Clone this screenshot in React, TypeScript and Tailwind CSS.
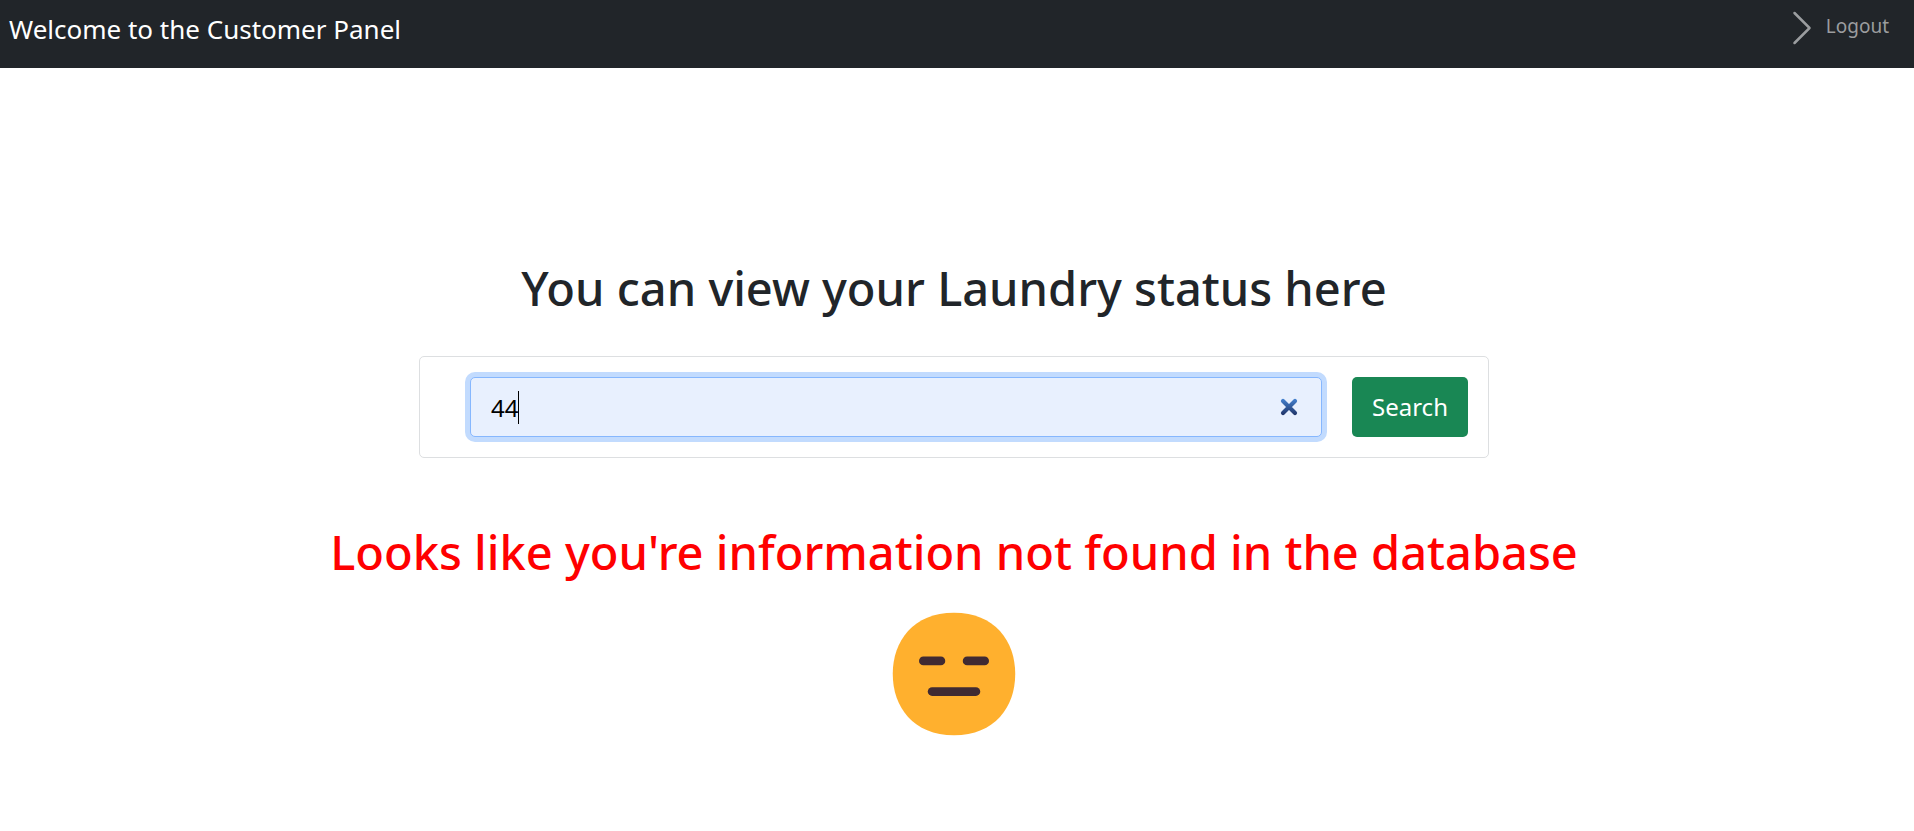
import { useRef, useState } from "react";

function ChevronIcon() {
  return (
    <svg viewBox="0 0 16 16" fill="currentColor" className="size-10 shrink-0" aria-hidden="true">
      <path
        fillRule="evenodd"
        d="M4.646 1.646a.5.5 0 0 1 .708 0l6 6a.5.5 0 0 1 0 .708l-6 6a.5.5 0 0 1-.708-.708L10.293 8 4.646 2.354a.5.5 0 0 1 0-.708z"
      />
    </svg>
  );
}

function ExpressionlessFace() {
  return (
    <svg viewBox="0 0 32 32" className="size-[140px]" role="img" aria-label="Expressionless face">
      <path
        d="M15.9989 29.9978C25.3333 29.9978 29.9978 23.5303 29.9978 15.9989C29.9978 8.46746 25.3333 2 15.9989 2C6.66443 2 2 8.46746 2 15.9989C2 23.5303 6.66443 29.9978 15.9989 29.9978Z"
        fill="#FFB02E"
      />
      <rect x="8" y="12" width="6" height="2" rx="1" fill="#402A32" />
      <rect x="18" y="12" width="6" height="2" rx="1" fill="#402A32" />
      <rect x="10" y="19" width="12" height="2" rx="1" fill="#402A32" />
    </svg>
  );
}

function ClearIcon() {
  return (
    <svg viewBox="0 0 18 18" className="size-[18px]" aria-hidden="true">
      <defs>
        <linearGradient id="clear" gradientUnits="userSpaceOnUse" x1="0" y1="1" x2="0" y2="17">
          <stop offset="0" stopColor="#4481cf" />
          <stop offset="1" stopColor="#203468" />
        </linearGradient>
      </defs>
      <path d="M3 3L15 15M15 3L3 15" stroke="url(#clear)" strokeWidth="4.2" strokeLinecap="round" />
    </svg>
  );
}

function SearchForm() {
  const [value, setValue] = useState("44");
  const input = useRef<HTMLInputElement>(null);
  return (
    <form
      className="flex w-full max-w-[1070px] gap-[30px] rounded-[5px] border border-[#dddfe1] p-5 pl-[50px]"
      onSubmit={(event) => event.preventDefault()}
    >
      <div className="relative min-w-0 flex-1">
        <input
          ref={input}
          type="text"
          aria-label="Search"
          value={value}
          onChange={(event) => setValue(event.target.value)}
          className="h-[60px] w-full rounded-[5px] border border-[#86b7fe] bg-[#e8f0fe] pr-12 pl-5 text-[24px] text-black caret-transparent outline-none ring-[5px] ring-[#c2dbfe]"
        />
        <span className="pointer-events-none absolute inset-y-0 left-[21px] flex items-center text-[24px]" aria-hidden="true">
          <span className="invisible">{value}</span>
          <span className="h-[33px] w-px bg-black" />
        </span>
        <button
          type="button"
          aria-label="Clear"
          onClick={() => {
            setValue("");
            input.current?.focus();
          }}
          className="absolute inset-y-0 right-6 flex items-center"
        >
          <ClearIcon />
        </button>
      </div>
      <button type="submit" className="h-[60px] w-[116px] shrink-0 rounded-[5px] bg-[#198754] text-[24px] text-white">
        Search
      </button>
    </form>
  );
}

export default function App() {
  return (
    <div className="min-h-screen bg-white font-['Noto_Sans','Open_Sans',sans-serif] text-[#212529]">
      <header className="flex h-[68px] items-start justify-between bg-[#212529] pr-[25px] pl-[9px]">
        <h1 className="pt-2 text-[26px] leading-[42px] text-white">Welcome to the Customer Panel</h1>
        <a href="#logout" className="flex items-start gap-1 pt-2 text-[19px] leading-9 text-[#9b9d9f]">
          <ChevronIcon />
          Logout
        </a>
      </header>
      <main className="flex flex-col items-center pt-[190px] pr-[6px]">
        <h2 className="text-[47px] leading-[60px] font-medium">You can view your Laundry status here</h2>
        <div className="mt-[38px] flex w-full justify-center">
          <SearchForm />
        </div>
        <p className="mt-[64px] text-[47px] leading-[60px] font-medium text-[#ff0000]">
          Looks like you're information not found in the database
        </p>
        <div className="mt-[22px]">
          <ExpressionlessFace />
        </div>
      </main>
    </div>
  );
}
